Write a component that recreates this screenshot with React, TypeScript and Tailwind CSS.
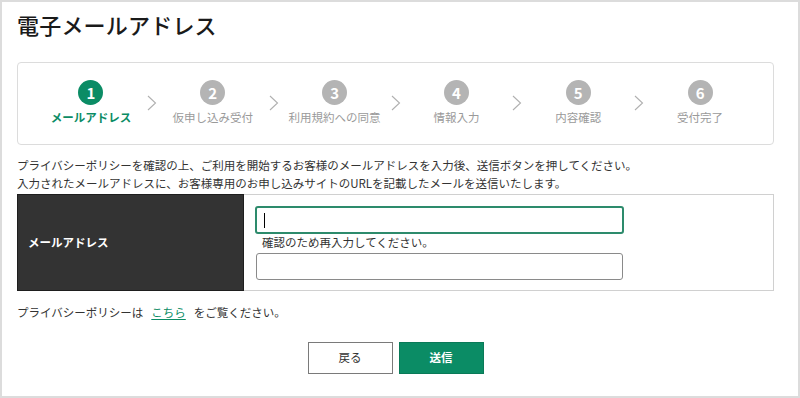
import React from "react";

const steps = ["メールアドレス", "仮申し込み受付", "利用規約への同意", "情報入力", "内容確認", "受付完了"];

function Chevron() {
  return (
    <svg width="10" height="16" viewBox="0 0 10 16" className="block">
      <polyline points="1,1 8.5,8 1,15" fill="none" stroke="#b0b0b0" strokeWidth="1.1" />
    </svg>
  );
}

export default function App() {
  return (
    <div
      className="w-[800px] h-[398px] border-2 border-[#dcdcdc] bg-white pl-[15px] pr-[24px] text-[#333] overflow-hidden"
      style={{ fontFamily: '"Noto Sans CJK JP", "Noto Sans", sans-serif' }}
    >
      <h1 className="pt-[7px] text-[22px] leading-[30px] font-medium text-[#1a1a1a] tracking-[0.2px]">電子メールアドレス</h1>

      <div className="mt-[23px] h-[83px] border border-[#dcdcdc] rounded-[4px] pt-[17px] px-[12px] grid grid-cols-6">
        {steps.map((s, i) => (
          <div key={s} className="relative flex flex-col items-center">
            <div
              className={
                "w-[25px] h-[25px] rounded-full flex items-center justify-center text-white text-[15px] font-bold leading-none " +
                (i === 0 ? "bg-[#0b8c65]" : "bg-[#b4b4b4]")
              }
            >
              {i + 1}
            </div>
            <div
              className={
                "mt-[4px] text-[11.5px] leading-[16px] whitespace-nowrap " +
                (i === 0 ? "text-[#0b8c65] font-bold" : "text-[#9a9a9a]")
              }
            >
              {s}
            </div>
            {i < 5 && (
              <div className="absolute right-[-5px] top-[15px]">
                <Chevron />
              </div>
            )}
          </div>
        ))}
      </div>

      <div className="mt-[11px] text-[11.5px] leading-[18px]">
        <p>プライバシーポリシーを確認の上、ご利用を開始するお客様のメールアドレスを入力後、送信ボタンを押してください。</p>
        <p>入力されたメールアドレスに、お客様専用のお申し込みサイトのURLを記載したメールを送信いたします。</p>
      </div>

      <div className="mt-[2px] flex h-[97px]">
        <div className="w-[227px] bg-[#333] border border-[#1e1e1e] flex items-center pl-[10px] text-white font-bold text-[11.5px]">
          メールアドレス
        </div>
        <div className="flex-1 border-y border-r border-[#d0d0d0] pl-[11px] pt-[11px]">
          <div className="w-[369px] h-[28px] border-2 border-[#2d8b6c] rounded-[3px] flex items-center pl-[7px]">
            <span className="w-px h-[15px] bg-black" />
          </div>
          <div className="pl-[7px] text-[11.5px] leading-[16px] text-[#333]">確認のため再入力してください。</div>
          <div className="mt-[3px] ml-px w-[367px] h-[27px] border border-[#8a8a8a] rounded-[3px]" />
        </div>
      </div>

      <p className="mt-[12px] text-[11.5px] leading-[18px]">
        プライバシーポリシーは
        <a className="mx-[8px] text-[#0b8c65] underline underline-offset-2">こちら</a>
        をご覧ください。
      </p>

      <div className="mt-[21px] flex justify-center gap-[6px]">
        <button className="w-[85px] h-[32px] border border-[#7a7a7a] bg-white text-[11.5px] text-[#333]">戻る</button>
        <button className="w-[85px] h-[32px] bg-[#0b8c65] border border-[#0a7a58] text-[11.5px] font-bold text-white">送信</button>
      </div>
    </div>
  );
}
